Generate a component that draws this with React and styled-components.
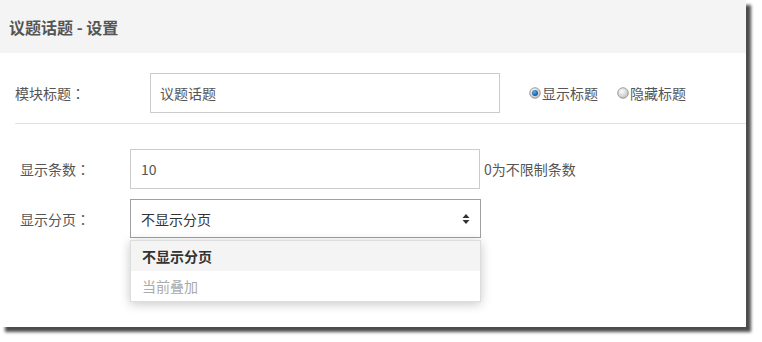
import React from "react";
import styled, { createGlobalStyle } from "styled-components";

const GlobalStyle = createGlobalStyle`
  html, body {
    margin: 0;
    padding: 0;
    background: #fff;
  }
  body {
    font-family: "Noto Sans CJK SC", "Liberation Sans", sans-serif;
    font-size: 14px;
    color: #555;
  }
`;

const Page = styled.div`
  padding-bottom: 15px;
`;

const Panel = styled.div`
  width: 746px;
  height: 327px;
  background: #fff;
  box-shadow: 5px 5px 3px rgba(0, 0, 0, 0.7);
`;

const Header = styled.div`
  height: 53px;
  background: #f4f4f4;
  display: flex;
  align-items: center;
  padding-left: 9px;
  font-size: 16px;
  font-weight: bold;
  color: #555;
`;

const TopRow = styled.div`
  display: flex;
  align-items: center;
  padding: 20px 0 0 15px;
  height: 40px;
`;

const Label = styled.div`
  width: ${(p) => p.width}px;
  flex-shrink: 0;
`;

const Colon = styled.span`
  font-family: "Noto Sans CJK JP", sans-serif;
`;

const Input = styled.div`
  box-sizing: border-box;
  width: ${(p) => p.width || 350}px;
  height: ${(p) => p.height || 40}px;
  border: 1px solid ${(p) => (p.dark ? "#a0a0a0" : "#ccc")};
  padding-left: ${(p) => p.pad || 9}px;
  display: flex;
  align-items: center;
  color: #555;
  background: #fff;
`;

const Radios = styled.div`
  display: flex;
  gap: 19px;
  margin-left: 29px;
`;

const Radio = styled.label`
  display: flex;
  align-items: center;
  gap: 1px;
  color: #555;
`;

const Divider = styled.div`
  height: 1px;
  background: #e2e2e2;
  margin: 10px 0 0 15px;
`;

const Form = styled.div`
  padding: 25px 0 0 20px;
  display: flex;
  flex-direction: column;
  gap: 10px;
`;

const Row = styled.div`
  display: flex;
  align-items: center;
`;

const Hint = styled.span`
  margin-left: 4px;
`;

const SelectWrap = styled.div`
  position: relative;
`;

const Select = styled(Input)`
  width: 351px;
  height: 39px;
  justify-content: space-between;
  padding-right: 10px;
  color: #333;
`;

const Menu = styled.div`
  position: absolute;
  top: 41px;
  left: 0;
  width: 351px;
  box-sizing: border-box;
  border: 1px solid #ddd;
  background: #fff;
  box-shadow: 0 2px 10px rgba(0, 0, 0, 0.22);
`;

const Option = styled.div`
  height: 30px;
  display: flex;
  align-items: center;
  padding-left: 11px;
  background: ${(p) => (p.active ? "#f4f4f4" : "#fff")};
  color: ${(p) => (p.active ? "#333" : "#aaa")};
  font-weight: ${(p) => (p.active ? "bold" : "normal")};
`;

const RadioIcon = ({ checked }) => (
  <svg width="12" height="12" viewBox="0 0 12 12">
    <defs>
      <radialGradient id="rg" cx="40%" cy="35%" r="70%">
        <stop offset="0%" stopColor="#fff" />
        <stop offset="100%" stopColor="#bbb" />
      </radialGradient>
      <radialGradient id="blue" cx="40%" cy="35%" r="70%">
        <stop offset="0%" stopColor="#5ab0ee" />
        <stop offset="100%" stopColor="#0c4d8a" />
      </radialGradient>
    </defs>
    <circle cx="6" cy="6" r="5.3" fill="url(#rg)" stroke="#8a8a8a" strokeWidth="0.8" />
    {checked && <circle cx="6" cy="6" r="3" fill="url(#blue)" />}
  </svg>
);

const Arrows = () => (
  <svg width="8" height="12" viewBox="0 0 8 12">
    <path d="M4 1 L7.5 5 L0.5 5 Z" fill="#333" />
    <path d="M4 11 L7.5 7 L0.5 7 Z" fill="#333" />
  </svg>
);

const App = () => {
  return (
    <Page>
      <GlobalStyle />
      <Panel>
        <Header>议题话题 - 设置</Header>
        <TopRow>
          <Label width={135}>
            模块标题<Colon>：</Colon>
          </Label>
          <Input width={350}>议题话题</Input>
          <Radios>
            <Radio>
              <RadioIcon checked />
              显示标题
            </Radio>
            <Radio>
              <RadioIcon />
              隐藏标题
            </Radio>
          </Radios>
        </TopRow>
        <Divider />
        <Form>
          <Row>
            <Label width={110}>
              显示条数<Colon>：</Colon>
            </Label>
            <Input width={350} pad={10}>10</Input>
            <Hint>0为不限制条数</Hint>
          </Row>
          <Row>
            <Label width={110}>
              显示分页<Colon>：</Colon>
            </Label>
            <SelectWrap>
              <Select dark pad={10}>
                不显示分页
                <Arrows />
              </Select>
              <Menu>
                <Option active>不显示分页</Option>
                <Option>当前叠加</Option>
              </Menu>
            </SelectWrap>
          </Row>
        </Form>
      </Panel>
    </Page>
  );
};

export default App;
